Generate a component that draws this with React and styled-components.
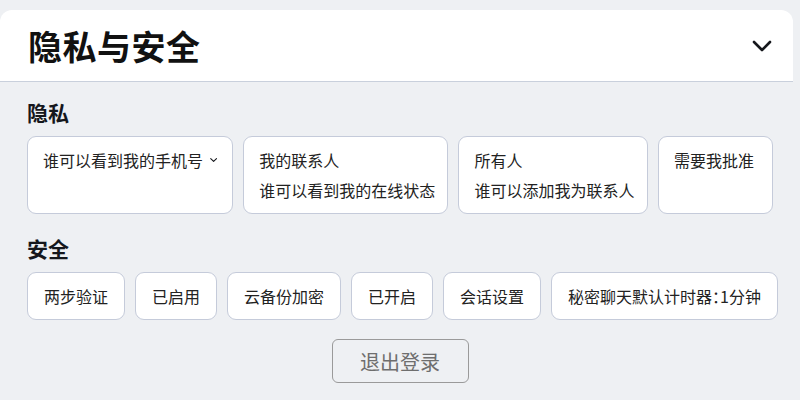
import styled, { createGlobalStyle } from "styled-components";

const GlobalStyle = createGlobalStyle`
  body {
    margin: 0;
    background: #eef0f3;
    font-family: "Noto Sans CJK SC", "Noto Sans", sans-serif;
    color: #1d1f24;
  }
`;

const Page = styled.div`
  width: 800px;
  height: 400px;
  overflow: hidden;
`;

const Header = styled.div`
  margin: 10px 7px 0 0;
  height: 71px;
  background: #fff;
  border-radius: 12px 12px 0 0;
  border-bottom: 1px solid #c9d0dc;
  display: flex;
  align-items: center;
  justify-content: space-between;
  padding: 0 21px 0 28px;
`;

const Title = styled.h1`
  margin: 0;
  font-size: 34px;
  font-weight: 700;
  color: #111;
  letter-spacing: 0.5px;
`;

const Content = styled.div`
  padding: 0 27px;
  display: flex;
  flex-direction: column;
`;

const SectionTitle = styled.h2`
  margin: ${(p) => p.$top}px 0 10px;
  font-size: 21px;
  font-weight: 700;
  line-height: 28px;
  color: #15171c;
`;

const Row = styled.div`
  display: flex;
  gap: 10px;
`;

const Card = styled.div`
  box-sizing: border-box;
  height: 78px;
  min-width: ${(p) => p.$min || 0}px;
  padding: 8px 15px;
  background: #fff;
  border: 1px solid #c5cbda;
  border-radius: 9px;
  font-size: 16px;
  line-height: 30px;
  color: #222;
  white-space: nowrap;
`;

const Line = styled.div`
  display: flex;
  align-items: center;
  gap: 7px;
`;

const Chip = styled.div`
  box-sizing: border-box;
  height: 48px;
  padding: 0 16px;
  display: flex;
  align-items: center;
  background: #fff;
  border: 1px solid #c5cbda;
  border-radius: 9px;
  font-size: 16px;
  font-feature-settings: "halt";
  color: #222;
  white-space: nowrap;
`;

const Logout = styled.button`
  align-self: center;
  margin-top: 19px;
  width: 137px;
  height: 44px;
  background: transparent;
  border: 1.5px solid #9a9a9a;
  border-radius: 6px;
  font-family: inherit;
  font-size: 20px;
  color: #6e6e6e;
  cursor: pointer;
`;

const Chevron = ({ size = 20, stroke = 2.6 }) => (
  <svg width={size} height={size * 0.6} viewBox="0 0 20 12" fill="none">
    <path d="M2 2l8 8 8-8" stroke="#15171c" strokeWidth={stroke} strokeLinecap="round" strokeLinejoin="round" />
  </svg>
);

const security = ["两步验证", "已启用", "云备份加密", "已开启", "会话设置", "秘密聊天默认计时器：1分钟"];

export default function App() {
  return (
    <Page>
      <GlobalStyle />
      <Header>
        <Title>隐私与安全</Title>
        <Chevron size={20} stroke={2.6} />
      </Header>
      <Content>
        <SectionTitle $top={16}>隐私</SectionTitle>
        <Row>
          <Card>
            <Line>
              谁可以看到我的手机号
              <Chevron size={10} stroke={3} />
            </Line>
          </Card>
          <Card>
            <Line>我的联系人</Line>
            <Line>谁可以看到我的在线状态</Line>
          </Card>
          <Card>
            <Line>所有人</Line>
            <Line>谁可以添加我为联系人</Line>
          </Card>
          <Card $min={115}>
            <Line>需要我批准</Line>
          </Card>
        </Row>
        <SectionTitle $top={20}>安全</SectionTitle>
        <Row>
          {security.map((s) => (
            <Chip key={s}>{s}</Chip>
          ))}
        </Row>
        <Logout>退出登录</Logout>
      </Content>
    </Page>
  );
}
